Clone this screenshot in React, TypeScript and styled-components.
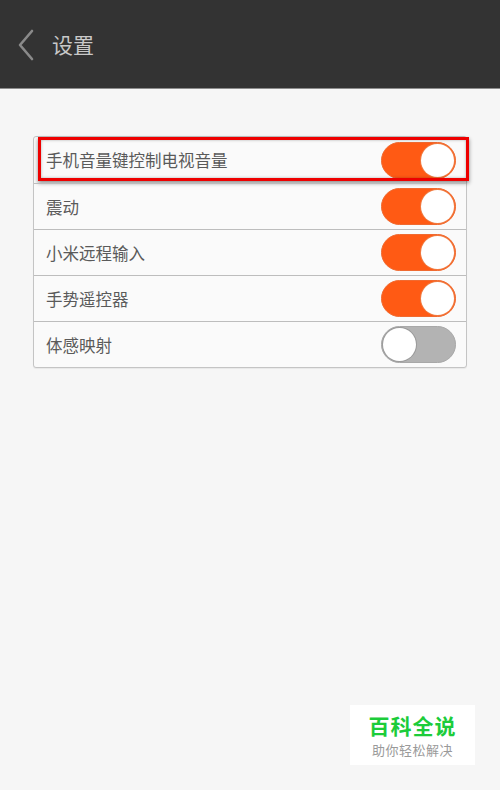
import React from 'react'
import styled, { createGlobalStyle } from 'styled-components'

const GlobalStyle = createGlobalStyle`
  html, body {
    margin: 0;
    padding: 0;
    background: #f6f6f6;
    font-family: "Noto Sans CJK SC", "Noto Sans", sans-serif;
  }
`

const items = [
  { label: '手机音量键控制电视音量', on: true, marked: true },
  { label: '震动', on: true },
  { label: '小米远程输入', on: true },
  { label: '手势遥控器', on: true },
  { label: '体感映射', on: false },
]

export default function App() {
  return (
    <Page>
      <GlobalStyle />
      <TopBar>
        <BackIcon width="18" height="32" viewBox="0 0 18 32">
          <path d="M15 2 L3 16 L15 30" fill="none" stroke="#8a8a8a" strokeWidth="2.6" strokeLinecap="round" strokeLinejoin="round" />
        </BackIcon>
        <Title>设置</Title>
      </TopBar>
      <Content>
        <Card>
          {items.map((item) => (
            <Row key={item.label}>
              <Label>{item.label}</Label>
              <Switch $on={item.on}>
                <Knob $on={item.on} />
              </Switch>
              {item.marked && <Marker />}
            </Row>
          ))}
        </Card>
      </Content>
      <Badge>
        <BadgeTitle>百科全说</BadgeTitle>
        <BadgeSub>助你轻松解决</BadgeSub>
      </Badge>
    </Page>
  )
}

const Page = styled.div`
  position: relative;
  width: 500px;
  height: 790px;
  background: #f6f6f6;
  overflow: hidden;
`

const TopBar = styled.div`
  height: 89px;
  background: #333333;
  border-bottom: 1px solid #8d8d8d;
  display: flex;
  align-items: center;
  padding-left: 17px;
  box-sizing: border-box;
`

const BackIcon = styled.svg`
  margin-top: 2px;
`

const Title = styled.div`
  margin-left: 17px;
  color: #c8c8c8;
  font-size: 21px;
  line-height: 1;
`

const Content = styled.div`
  padding: 47px 33px 0 33px;
`

const Card = styled.div`
  background: #fafafa;
  border: 1px solid #c4c4c4;
  border-radius: 3px;
  box-shadow: 0 1px 1px rgba(0, 0, 0, 0.06);
`

const Row = styled.div`
  position: relative;
  height: 45px;
  display: flex;
  align-items: center;
  justify-content: space-between;
  padding: 0 10px 0 12px;
  &:first-child {
    height: 46px;
  }
  & + & {
    border-top: 1px solid #bdbdbd;
  }
`

const Label = styled.div`
  color: #5a5a5a;
  font-size: 16.5px;
`

const Switch = styled.div<{ $on: boolean }>`
  width: 75px;
  height: 37px;
  border-radius: 19px;
  box-sizing: border-box;
  background: ${(p) => (p.$on ? '#ff5a14' : '#b3b3b3')};
  border: 1px solid ${(p) => (p.$on ? '#f06a30' : '#a8a8a8')};
  display: flex;
  justify-content: ${(p) => (p.$on ? 'flex-end' : 'flex-start')};
  align-items: center;
  padding: 1px;
`

const Knob = styled.div<{ $on: boolean }>`
  width: 33px;
  height: 33px;
  border-radius: 50%;
  background: #ffffff;
  box-shadow: 0 0 0 1px ${(p) => (p.$on ? '#f07a40' : '#9a9a9a')};
`

const Marker = styled.div`
  position: absolute;
  left: 4px;
  right: -3px;
  top: 0;
  bottom: 2px;
  border: 3px solid #ee0000;
  box-shadow: 0 2px 4px rgba(0, 0, 0, 0.45), inset 0 0 3px rgba(0, 0, 0, 0.3);
  pointer-events: none;
`

const Badge = styled.div`
  position: absolute;
  left: 350px;
  top: 705px;
  width: 125px;
  height: 60px;
  background: #ffffff;
  display: flex;
  flex-direction: column;
  align-items: center;
  justify-content: center;
  gap: 3px;
`

const BadgeTitle = styled.div`
  color: #1ccc3a;
  font-size: 21px;
  font-weight: 700;
  line-height: 26px;
  letter-spacing: 1px;
`

const BadgeSub = styled.div`
  color: #9a9a9a;
  font-size: 13px;
  line-height: 17px;
  letter-spacing: 0.5px;
`
